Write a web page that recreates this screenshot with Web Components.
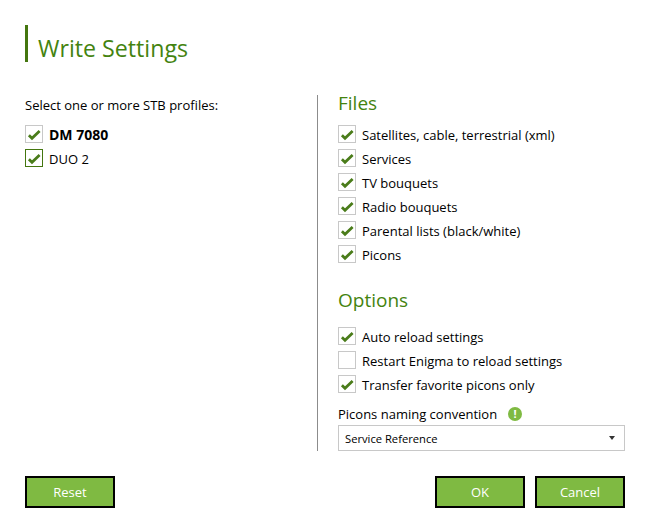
<!DOCTYPE html>
<html>
<head>
<meta charset="utf-8">
<title>Write Settings</title>
<style>
  html, body { margin: 0; padding: 0; background: #fff; }
  body { font-family: "Open Sans", "Noto Sans", sans-serif; font-size: 13px; color: #000; }
</style>
</head>
<body>
<write-settings>
  <check-row slot="profiles" checked strong>DM 7080</check-row>
  <check-row slot="profiles" checked accent>DUO 2</check-row>

  <check-row slot="files" checked>Satellites, cable, terrestrial (xml)</check-row>
  <check-row slot="files" checked>Services</check-row>
  <check-row slot="files" checked>TV bouquets</check-row>
  <check-row slot="files" checked>Radio bouquets</check-row>
  <check-row slot="files" checked>Parental lists (black/white)</check-row>
  <check-row slot="files" checked>Picons</check-row>

  <check-row slot="options" checked>Auto reload settings</check-row>
  <check-row slot="options">Restart Enigma to reload settings</check-row>
  <check-row slot="options" checked>Transfer favorite picons only</check-row>

  <flat-button slot="reset">Reset</flat-button>
  <flat-button slot="actions">OK</flat-button>
  <flat-button slot="actions">Cancel</flat-button>
</write-settings>

<script>
/**
 * A checkbox with its label.
 */
customElements.define('check-row',
  class extends HTMLElement {
    constructor () {
      super()
      this.attachShadow({ mode: 'open' }).innerHTML = `
<style>
  :host { display: flex; align-items: center; gap: 6px; height: 18px; margin-bottom: 6px; font-size: 13px; line-height: 18px; white-space: nowrap; }
  #box { box-sizing: border-box; width: 18px; height: 18px; border: 1px solid #c8c8c8; background: #fff; display: flex; align-items: center; justify-content: center; flex: none; }
  :host([accent]) #box { border-color: #44760f; }
  svg { display: none; }
  :host([checked]) svg { display: block; }
  #text { padding-top: 2px; }
  :host([strong]) #text { font-weight: 700; font-size: 14px; }
</style>
<div id="box">
  <svg width="14" height="14" viewBox="0 0 14 14"><path d="M1.9 8.2 L5 11.2 L12.6 4" fill="none" stroke="#4a7c1a" stroke-width="2.8"/></svg>
</div>
<span id="text"><slot></slot></span>
`
    }
  }
)

/**
 * Green button with a black frame.
 */
customElements.define('flat-button',
  class extends HTMLElement {
    constructor () {
      super()
      this.attachShadow({ mode: 'open' }).innerHTML = `
<style>
  :host { display: flex; align-items: center; justify-content: center; box-sizing: border-box; width: 90px; height: 32px; border: 2px solid #000; background: #7fba42; color: #fff; font-size: 13px; }
</style>
<slot></slot>
`
    }
  }
)

/**
 * The dropdown box.
 */
customElements.define('combo-box',
  class extends HTMLElement {
    constructor () {
      super()
      this.attachShadow({ mode: 'open' }).innerHTML = `
<style>
  :host { display: flex; align-items: center; justify-content: space-between; box-sizing: border-box; height: 26px; border: 1px solid #c8c8c8; padding: 0 9px 0 6px; font-size: 11.2px; background: #fff; }
  #arrow { width: 0; height: 0; border-left: 3.5px solid transparent; border-right: 3.5px solid transparent; border-top: 4px solid #333; }
</style>
<span><slot></slot></span>
<div id="arrow"></div>
`
    }
  }
)

/**
 * The whole dialog.
 */
customElements.define('write-settings',
  class extends HTMLElement {
    constructor () {
      super()
      this.attachShadow({ mode: 'open' }).innerHTML = `
<style>
  :host { display: flex; flex-direction: column; box-sizing: border-box; width: 650px; height: 532px; padding: 25px 25px 24px; }
  h1 { margin: 0 0 33px; height: 37px; border-left: 3px solid #44760f; padding-left: 10px; font-size: 23.2px; font-weight: 400; line-height: 46px; color: #44830f; }
  #main { display: flex; height: 356px; }
  #left { width: 292px; flex: none; border-right: 1px solid #8c8c8c; box-sizing: content-box; }
  #right { flex: 1; padding-left: 20px; display: flex; flex-direction: column; }
  p { margin: 0 0 9px; height: 21px; line-height: 21px; font-size: 13px; }
  h2 { margin: 0 0 6px; font-size: 19px; font-weight: 400; height: 24px; line-height: 16px; color: #44830f; }
  #options { margin-top: 23px; margin-bottom: 11px; }
  #label { display: flex; align-items: center; gap: 11px; height: 18px; margin-bottom: 2px; margin-top: 6px; }
  #info { width: 14px; height: 14px; border-radius: 50%; background: #7fba42; color: #fff; font-size: 11px; font-weight: 700; line-height: 14px; text-align: center; }
  #buttons { display: flex; justify-content: space-between; margin-top: 25px; }
  #actions { display: flex; gap: 10px; }
</style>
<h1>Write Settings</h1>
<div id="main">
  <div id="left">
    <p>Select one or more STB profiles:</p>
    <slot name="profiles"></slot>
  </div>
  <div id="right">
    <h2>Files</h2>
    <slot name="files"></slot>
    <h2 id="options">Options</h2>
    <slot name="options"></slot>
    <div id="label"><span>Picons naming convention</span><div id="info">!</div></div>
    <combo-box>Service Reference</combo-box>
  </div>
</div>
<div id="buttons">
  <slot name="reset"></slot>
  <div id="actions"><slot name="actions"></slot></div>
</div>
`
    }
  }
)
</script>
</body>
</html>
